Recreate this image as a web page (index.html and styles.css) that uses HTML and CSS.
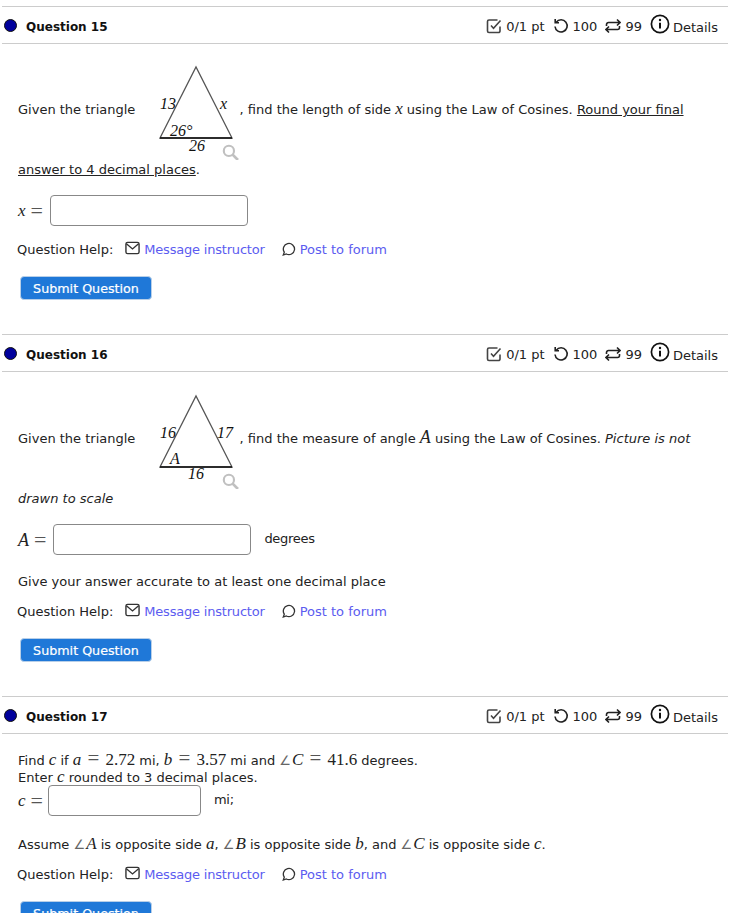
FILE: index.html
```html
<!DOCTYPE html>
<html lang="en">
<head>
    <meta charset="UTF-8">
    <meta name="viewport" content="width=device-width, initial-scale=1.0">
    <title>Assignment</title>
    <link rel="stylesheet" href="styles.css">
</head>
<body>
    <svg class="defs" width="0" height="0">
        <symbol id="i-check" viewBox="0 0 16 16"><path d="M14 8.500V13a1.500 1.500 0 0 1-1.500 1.500H3A1.500 1.500 0 0 1 1.500 13V3.500A1.500 1.500 0 0 1 3 2h8.500" fill="none" stroke="#444" stroke-width="1.600"/><path d="M5 7.500l2.500 2.700L14.500 2.500" fill="none" stroke="#444" stroke-width="1.600"/></symbol>
        <symbol id="i-retry" viewBox="0 0 16 16"><path d="M3.200 4.200A6.100 6.100 0 1 1 2 8.500" fill="none" stroke="#222" stroke-width="1.600"/><path d="M2.200 1v3.800H6" fill="none" stroke="#222" stroke-width="1.600"/></symbol>
        <symbol id="i-loop" viewBox="0 0 16 16"><path d="M1.500 8V6.500a2 2 0 0 1 2-2h11M12 1.500l3 3-3 3M14.500 8v1.500a2 2 0 0 1-2 2h-11M4 8.500l-3 3 3 3" fill="none" stroke="#222" stroke-width="1.600"/></symbol>
        <symbol id="i-info" viewBox="0 0 20 20"><circle cx="10" cy="10" r="8.600" fill="none" stroke="#111" stroke-width="1.700"/><circle cx="10" cy="6" r="1.200" fill="#111"/><path d="M10 8.800v5.600" stroke="#111" stroke-width="2"/></symbol>
        <symbol id="i-mail" viewBox="0 0 16 14"><rect x="1" y="1" width="14" height="12" rx="1.800" fill="none" stroke="#333" stroke-width="1.500"/><path d="M1.500 2.500L8 8l6.500-5.500" fill="none" stroke="#333" stroke-width="1.500"/></symbol>
        <symbol id="i-chat" viewBox="0 0 14 14"><path d="M1.300 13l1-2.800A5.600 5.600 0 1 1 4.300 12z" fill="none" stroke="#333" stroke-width="1.300"/></symbol>
        <symbol id="i-zoom" viewBox="0 0 16 16"><circle cx="6.500" cy="6.500" r="4.800" fill="none" stroke="#c0c0c0" stroke-width="2"/><path d="M10 10l5 5" stroke="#c0c0c0" stroke-width="2.600"/></symbol>
    </svg>

    <!-- Question 15 -->
    <section class="question q15">
        <div class="question-head">
            <h3 class="question-title"><span class="dot"></span>Question 15</h3>
            <div class="meta">
                <svg class="ico-16"><use href="#i-check"/></svg><span>0/1 pt</span>
                <svg class="ico-16 gap"><use href="#i-retry"/></svg><span>100</span>
                <svg class="ico-16 gap"><use href="#i-loop"/></svg><span>99</span>
                <svg class="ico-20 gap"><use href="#i-info"/></svg><span class="details">Details</span>
            </div>
        </div>
        <div class="question-body">
            <p class="prompt">Given the triangle
                <svg class="tri" width="100" height="100" viewBox="0 0 100 100">
                    <path d="M1 78L37 7L73 78z" fill="none" stroke="#555" stroke-width="1.300"/>
                    <path d="M1 78H73" stroke="#111" stroke-width="1.300"/>
                    <text x="1" y="49">13</text>
                    <text x="61" y="49" font-size="13">x</text>
                    <text x="11" y="76">26°</text>
                    <text x="30" y="91">26</text>
                    <use href="#i-zoom" x="63" y="84" width="17" height="17"/>
                </svg>
                , find the length of side <i class="math">x</i> using the Law of Cosines. <u>Round your final answer to 4 decimal places</u>.</p>
            <div class="answer ans-15"><i class="math">x</i> <span class="math-op">=</span> <input class="answer-box wide" type="text"></div>
            <div class="help"><span>Question Help:</span>
                <span class="help-link"><svg class="ico-mail"><use href="#i-mail"/></svg><a class="msg" href="#">Message instructor</a></span>
                <span class="help-link"><svg class="ico-chat"><use href="#i-chat"/></svg><a href="#">Post to forum</a></span>
            </div>
            <button class="btn">Submit Question</button>
        </div>
    </section>

    <!-- Question 16 -->
    <section class="question q16">
        <div class="question-head">
            <h3 class="question-title"><span class="dot"></span>Question 16</h3>
            <div class="meta">
                <svg class="ico-16"><use href="#i-check"/></svg><span>0/1 pt</span>
                <svg class="ico-16 gap"><use href="#i-retry"/></svg><span>100</span>
                <svg class="ico-16 gap"><use href="#i-loop"/></svg><span>99</span>
                <svg class="ico-20 gap"><use href="#i-info"/></svg><span class="details">Details</span>
            </div>
        </div>
        <div class="question-body">
            <p class="prompt">Given the triangle
                <svg class="tri" width="100" height="100" viewBox="0 0 100 100">
                    <path d="M1 78L37 7L73 78z" fill="none" stroke="#555" stroke-width="1.300"/>
                    <path d="M1 78H73" stroke="#111" stroke-width="1.300"/>
                    <text x="1" y="49">16</text>
                    <text x="58" y="49">17</text>
                    <text x="11" y="75">A</text>
                    <text x="29" y="90">16</text>
                    <use href="#i-zoom" x="63" y="84" width="17" height="17"/>
                </svg>
                , find the measure of angle <i class="math big">A</i> using the Law of Cosines. <em>Picture is not drawn to scale</em></p>
            <div class="answer ans-16"><i class="math big">A</i> <span class="math-op">=</span> <input class="answer-box wide" type="text"> <span class="unit">degrees</span></div>
            <p class="note">Give your answer accurate to at least one decimal place</p>
            <div class="help"><span>Question Help:</span>
                <span class="help-link"><svg class="ico-mail"><use href="#i-mail"/></svg><a class="msg" href="#">Message instructor</a></span>
                <span class="help-link"><svg class="ico-chat"><use href="#i-chat"/></svg><a href="#">Post to forum</a></span>
            </div>
            <button class="btn">Submit Question</button>
        </div>
    </section>

    <!-- Question 17 -->
    <section class="question q17">
        <div class="question-head">
            <h3 class="question-title"><span class="dot"></span>Question 17</h3>
            <div class="meta">
                <svg class="ico-16"><use href="#i-check"/></svg><span>0/1 pt</span>
                <svg class="ico-16 gap"><use href="#i-retry"/></svg><span>100</span>
                <svg class="ico-16 gap"><use href="#i-loop"/></svg><span>99</span>
                <svg class="ico-20 gap"><use href="#i-info"/></svg><span class="details">Details</span>
            </div>
        </div>
        <div class="question-body">
            <p class="line">Find <i class="math">c</i> if <i class="math">a</i> <span class="math-op">=</span> <span class="math">2.72</span> mi, <i class="math">b</i> <span class="math-op">=</span> <span class="math">3.57</span> mi and <span class="angle">∠</span><i class="math">C</i> <span class="math-op">=</span> <span class="math">41.6</span> degrees.</p>
            <p class="line">Enter <i class="math">c</i> rounded to 3 decimal places.</p>
            <div class="answer ans-17"><i class="math">c</i> <span class="math-op">=</span> <input class="answer-box narrow" type="text"> <span class="unit">mi;</span></div>
            <p class="assume">Assume <span class="angle">∠</span><i class="math">A</i> is opposite side <i class="math">a</i>, <span class="angle">∠</span><i class="math">B</i> is opposite side <i class="math">b</i>, and <span class="angle">∠</span><i class="math">C</i> is opposite side <i class="math">c</i>.</p>
            <div class="help"><span>Question Help:</span>
                <span class="help-link"><svg class="ico-mail"><use href="#i-mail"/></svg><a class="msg" href="#">Message instructor</a></span>
                <span class="help-link"><svg class="ico-chat"><use href="#i-chat"/></svg><a href="#">Post to forum</a></span>
            </div>
            <button class="btn">Submit Question</button>
        </div>
    </section>
</body>
</html>
```

FILE: styles.css
```css
html, body {
    height: 913px;
    overflow: hidden;
}
body {
    font-family: "DejaVu Sans", sans-serif;
    font-size: 13px;
    color: #222;
    margin: 0;
    padding: 6px 25px 0 2px;
    background-color: #fff;
}
.defs {
    position: absolute;
}
.question {
    margin-bottom: 34px;
}
.question-head {
    display: flex;
    justify-content: space-between;
    align-items: center;
    height: 36px;
    border-top: 1px solid #ccc;
    border-bottom: 1px solid #ccc;
}
.question-title {
    display: flex;
    align-items: center;
    margin: 0;
    padding-top: 3px;
    font-size: 12px;
    font-weight: bold;
    color: #111;
}
.dot {
    width: 11px;
    height: 11px;
    margin: -3px 9px 0 2px;
    background-color: #00009c;
    border: 1px solid #111;
    border-radius: 50%;
}
.meta {
    display: flex;
    align-items: center;
    padding-right: 10px;
    color: #222;
}
.meta svg {
    margin-top: 1px;
}
.meta span {
    margin-left: 4px;
    padding-top: 3px;
}
.meta .gap {
    margin-left: 8px;
}
.meta .details {
    margin-left: 3px;
    padding-top: 4px;
}
.ico-16 {
    width: 16px;
    height: 16px;
}
.meta .ico-20 {
    width: 20px;
    height: 20px;
    margin-top: -2px;
}
.question-body {
    padding: 0 16px;
}
.prompt {
    margin: 16px 0 0;
    line-height: 20px;
}
.q16 .prompt {
    margin-top: 17px;
}
.tri {
    vertical-align: middle;
    margin: 0 -24px 0 20px;
}
.tri text {
    font-family: "Liberation Serif", serif;
    font-style: italic;
    font-size: 16px;
    fill: #111;
}
.math {
    font-family: "Liberation Serif", serif;
    font-size: 17px;
    line-height: 1;
}
.math.big {
    font-size: 18px;
}
.math-op {
    font-family: "Liberation Serif", serif;
    font-size: 21px;
    line-height: 0;
    color: #555;
}
.angle {
    font-family: "DejaVu Sans", sans-serif;
    font-size: 13px;
    line-height: 0;
    color: #666;
    margin-right: 1px;
}
.answer {
    display: flex;
    align-items: center;
    gap: 3px;
}
.answer .math-op {
    font-size: 22px;
    line-height: 1;
    margin-left: 2px;
}
.ans-15 {
    margin-top: 15px;
}
.ans-16 {
    margin-top: 15px;
}
.ans-17 {
    margin-top: -1px;
}
.answer-box {
    height: 31px;
    box-sizing: border-box;
    margin-left: 4px;
    padding: 0 6px;
    border: 1px solid #888;
    border-radius: 4px;
    background-color: #fff;
}
.wide {
    width: 198px;
}
.narrow {
    width: 153px;
    margin-left: 2px;
}
.unit {
    margin-left: 10px;
    margin-bottom: 2px;
    letter-spacing: -0.3px;
}
.note {
    margin: 19px 0 0;
}
.help {
    display: flex;
    align-items: center;
    gap: 12px;
    margin: 15px 0 0 -1px;
}
.q15 .help {
    margin-top: 16px;
}
.help-link {
    display: flex;
    align-items: center;
    gap: 4px;
}
.help-link + .help-link {
    margin-left: 5px;
}
.help-link a {
    color: #5c5cf0;
    text-decoration: none;
}
.msg {
    letter-spacing: -0.2px;
}
.ico-mail {
    width: 15px;
    height: 14px;
    margin-top: -3px;
}
.ico-chat {
    width: 14px;
    height: 14px;
    margin-top: -1px;
}
.btn {
    display: block;
    width: 132px;
    height: 24px;
    margin: 19px 0 0 2px;
    padding: 0;
    background-color: #1f78d8;
    color: #fff;
    font-family: inherit;
    font-size: 12.7px;
    font-weight: normal;
    -webkit-text-stroke: 0.2px #fff;
    border: 1px solid #b8cfe8;
    border-radius: 4px;
}
.line {
    margin: 0;
    line-height: 17px;
    white-space: nowrap;
}
.line .math {
    line-height: 0;
}
.line .math-op {
    margin: 0 2px;
}
.q17 .question-body {
    padding-top: 18px;
}
.assume {
    margin: 20px 0 -1px;
    line-height: 17px;
}
.assume .math {
    line-height: 0;
}
```
